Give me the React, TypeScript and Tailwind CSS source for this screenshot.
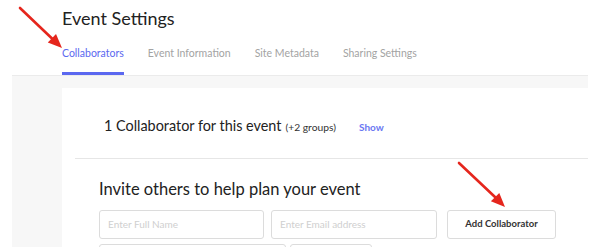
import React from 'react';

const tabs = ['Collaborators', 'Event Information', 'Site Metadata', 'Sharing Settings'];

const Arrow = ({ x1, y1, bx, by, points }: { x1: number; y1: number; bx: number; by: number; points: string }) => (
  <>
    <line x1={x1} y1={y1} x2={bx} y2={by} stroke="#e5261d" strokeWidth="2.6" strokeLinecap="round" />
    <polygon points={points} fill="#e5261d" />
  </>
);

const App = () => {
  return (
    <div
      className="relative w-[600px] h-[247px] overflow-hidden bg-white"
      style={{ fontFamily: 'Lato, "Open Sans", sans-serif' }}
    >
      <div className="pl-[62px] pt-[6px]">
        <h1 className="text-[18px] leading-[24px] text-[#222]">Event Settings</h1>
        <div className="flex gap-[24px] mt-[15px]">
          {tabs.map((tab, i) => (
            <div
              key={tab}
              className={
                i === 0
                  ? 'text-[10.5px] leading-[16px] pb-[11px] border-b-[3px] border-[#5b68f0] text-[#5b68f0]'
                  : 'text-[10.5px] leading-[16px] pb-[11px] text-[#a3a3a3]'
              }
            >
              {tab}
            </div>
          ))}
        </div>
      </div>

      <div className="ml-[12px] w-[576px] h-[200px] bg-[#f7f7f7] border-t border-[#ebebeb] pl-[50px] pt-[12px]">
        <div className="bg-white h-full">
          <div className="pl-[42px] pt-[28px] pb-[22px] flex items-baseline">
            <span className="text-[14.4px] leading-[20px] text-[#222]">1 Collaborator for this event</span>
            <span className="text-[10.3px] text-[#333] ml-[4px]">(+2 groups)</span>
            <span className="text-[10px] font-bold text-[#6b78f2] ml-[23px]">Show</span>
          </div>
          <div className="ml-[13px] h-px bg-[#e6e6e6]" />
          <div className="pl-[37px] pt-[20px]">
            <h2 className="text-[16.5px] leading-[20px] text-[#222]">Invite others to help plan your event</h2>
            <div className="flex mt-[11px]">
              <div className="w-[165px] h-[29px] border border-[#dcdcdc] rounded-[3px] flex items-center pl-[8px] text-[10px] text-[#cfcfcf]">
                Enter Full Name
              </div>
              <div className="w-[166px] h-[29px] ml-[7px] border border-[#dcdcdc] rounded-[3px] flex items-center pl-[8px] text-[10px] text-[#cfcfcf]">
                Enter Email address
              </div>
              <div className="w-[109px] h-[29px] ml-[10px] border border-[#dcdcdc] rounded-[3px] flex items-center justify-center text-[9.5px] font-bold text-[#333]">
                Add Collaborator
              </div>
            </div>
            <div className="flex mt-[5px]">
              <div className="w-[187px] h-[29px] border border-[#dcdcdc] rounded-[3px]" />
              <div className="w-[82px] h-[29px] ml-[4px] border border-[#dcdcdc] rounded-[3px]" />
            </div>
          </div>
        </div>
      </div>

      <svg className="absolute left-0 top-0 pointer-events-none" width="600" height="247">
        <Arrow x1={20} y1={8} bx={52} by={38.5} points="62,48 47.8,42.6 56,34" />
        <Arrow x1={459} y1={163} bx={495} by={197} points="505,207 490.9,201.3 499.3,192.9" />
      </svg>
    </div>
  );
};

export default App;
